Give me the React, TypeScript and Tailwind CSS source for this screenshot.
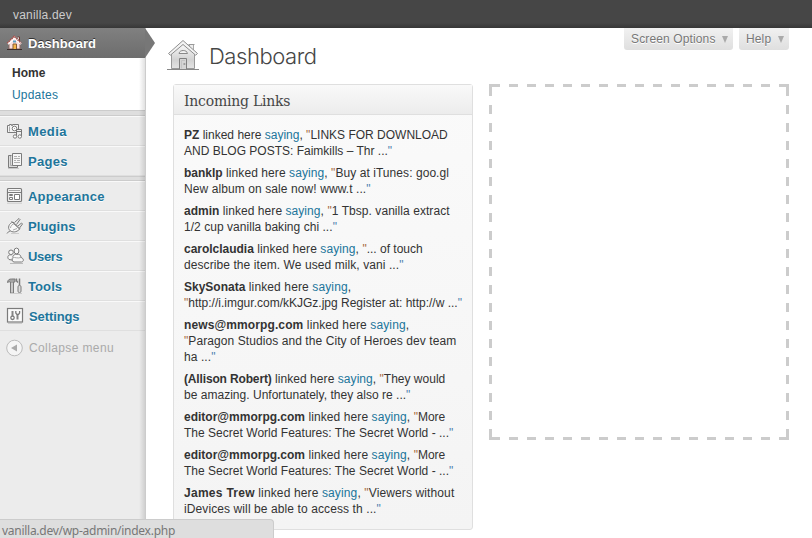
import type { ReactNode } from 'react';

const sans = "font-['Liberation_Sans',Arial,sans-serif]";

function Svg({ children, w = 18, h = 18 }: { children: ReactNode; w?: number; h?: number }) {
  return (
    <svg width={w} height={h} viewBox={`0 0 ${w} ${h}`} fill="none" stroke="#7b7b7b" strokeWidth="1" className="block shrink-0">
      {children}
    </svg>
  );
}

const MediaIcon = () => (
  <Svg>
    <path d="M1.5 3.500h2v-1h2v1h1v-1h6v8h-11z" fill="#f4f4f4" />
    <path d="M3.500 4.500v5" stroke="#aaa" />
    <circle cx="8.500" cy="6.500" r="2.300" fill="#fff" />
    <path d="M8 6.500h1" stroke="#aaa" />
    <path d="M10.500 14.500v-7h5v7" fill="#eee" stroke="#777" />
    <path d="M11 9.500h4" />
    <circle cx="9" cy="14.500" r="1.700" fill="#fff" />
    <circle cx="13.800" cy="14.500" r="1.700" fill="#fff" />
  </Svg>
);
const PagesIcon = () => (
  <Svg>
    <path d="M5.500 3.500h-3v12h9v-2" fill="#ddd" />
    <path d="M4.500 4v9.500h7" stroke="#aaa" />
    <path d="M6.500 1.500h9v12h-9z" fill="#f6f6f6" />
    <path d="M8 4.500h3M12 4.500h2M8 6.500h6M8 8.500h2M11 8.500h3M8 10.500h6" stroke="#b0b0b0" />
    <path d="M2 16.500h11" stroke="#c8c8c8" />
  </Svg>
);
const AppearanceIcon = () => (
  <Svg>
    <rect x="1.500" y="1.500" width="14" height="13" rx="1" fill="#f7f7f7" strokeWidth="1.200" />
    <path d="M3 3.500h11" stroke="#aaa" />
    <path d="M2 5.500h13" />
    <path d="M3.500 7.500h3v1h-3zM3.500 10.500h3v2h-3zM8.500 7.500h5v5h-5z" fill="#fff" />
    <path d="M1 16.200h15" stroke="#ccc" />
  </Svg>
);
const PluginsIcon = () => (
  <Svg>
    <path d="M1 16.500c1-2 2-1.500 3.500-2.500" />
    <path d="M4.500 14c-4-3-1-8 2.500-9l7 6.500c-2 3-6 4.500-9.500 2.500z" fill="#f8f8f8" />
    <path d="M5.500 4.500l8.500 8M8.500 5.500l4.500-4 1 1-3.500 5M12 9l3.500-3 1 1-3 4" fill="#eee" />
    <path d="M4.500 11c0-2 2-4 4-4.500M7 13l4-1.500" stroke="#aaa" />
    <path d="M5 16.500h8" stroke="#ccc" />
  </Svg>
);
const UsersIcon = () => (
  <Svg>
    <circle cx="5" cy="5.300" r="2.300" fill="#f8f8f8" />
    <path d="M5.500 8c-4-1-4.500 3-2.500 4.500l3 .5" fill="#f8f8f8" />
    <ellipse cx="10.500" cy="4" rx="2.400" ry="2.900" fill="#f8f8f8" />
    <path d="M9.500 7.300c-2 .7-3 1.700-2.500 3.200-1.500 1-1 4.500 1 4.500h7.500c3-.5 2-4-.5-4.500-.3-2-1-3-2.500-3.200z" fill="#f8f8f8" />
    <path d="M7 10.800c2-1 4 1 8-.3" stroke="#aaa" />
    <path d="M4 16.500h13" stroke="#bbb" />
  </Svg>
);
const ToolsIcon = () => (
  <Svg>
    <path d="M1.500 5.500c.3-3 2-3.500 4-3.500h3.500v3h-1.500v11h-3v-11c-1-.5-2 0-3 .5z" fill="#a5a5a5" />
    <path d="M6 6v9.500" stroke="#eee" />
    <path d="M10.500 1.500c-.5 2 0 3 1.500 4" strokeWidth="1.500" />
    <path d="M13.500 1.500v7" strokeWidth="1.500" />
    <rect x="12" y="8.500" width="3" height="7" rx="1.300" fill="#ddd" />
    <path d="M4 16.500h12" stroke="#ccc" />
  </Svg>
);
const SettingsIcon = () => (
  <Svg>
    <rect x="1.500" y="1.500" width="15" height="13.500" fill="#fafafa" strokeWidth="1.200" />
    <path d="M6.500 4v5M11.500 8v4.500" strokeWidth="2" stroke="#858585" />
    <circle cx="6.500" cy="10.800" r="1.700" fill="#fff" strokeWidth="1.300" />
    <path d="M9.800 4v2l1 1.300h1.800l1-1.300V4" strokeWidth="1.300" />
    <path d="M2 16.500h14" stroke="#ccc" />
  </Svg>
);
const ColorHouse = () => (
  <Svg>
    <path d="M11.500 3h2v4" fill="#fff" stroke="#713b35" />
    <path d="M3 9l5-6 6 6v6H3z" fill="#f9e0df" stroke="#8d6660" />
    <path d="M2 10l6.500-6.500 6.500 6.500" stroke="#fff" strokeWidth="2" />
    <path d="M1.200 9.300l7-7 7 7" stroke="#a84e49" strokeWidth="1.500" strokeDasharray="1.500 .6" />
    <path d="M7 7.500h3" stroke="#579fc4" strokeWidth="2" />
    <path d="M7 15V10h3.500v5" fill="#f6b64a" stroke="#865a36" />
    <path d="M1 15.500h15" stroke="#392d2d" />
  </Svg>
);
const BigHouse = () => (
  <Svg w={34} h={34}>
    <defs>
      <linearGradient id="wall" x1="0" y1="0" x2="0" y2="1">
        <stop stopColor="#fafafa" />
        <stop offset=".65" stopColor="#d2d2d2" />
        <stop offset="1" stopColor="#e4e4e4" />
      </linearGradient>
    </defs>
    <path d="M22.500 11V6.500h4V14" fill="#eee" stroke="#aaa" />
    <path d="M21.500 6.500h6" stroke="#999" />
    <path d="M4.500 15L16 6l11.500 9.500v15h-23z" fill="url(#wall)" stroke="#999" />
    <path d="M1.500 15.500L16 2.500l14.500 13-1.800 1.700L16 6.500 3.300 17.200z" fill="#f3f3f3" stroke="#8f8f8f" />
    <path d="M12 15.500c.5-4 8-4 8.500 0z" fill="#f1f1f1" stroke="#888" />
    <path d="M12.500 31V20.500h7V31" fill="#d5d5d5" stroke="#808080" />
    <path d="M14.500 30.500V22.500h3.500" stroke="#c4c4c4" />
    <path d="M16.500 26h1.800" stroke="#666" />
    <path d="M0 31.500h32" stroke="#888" />
  </Svg>
);

function MenuItem({ icon, label, track }: { icon: ReactNode; label: string; track: string }) {
  return (
    <div className="flex h-[30px] items-center border-t border-b border-t-[#f9f9f9] border-b-[#dfdfdf] pl-1.5 text-[13px] font-bold text-[#21759b]">
      {icon}
      <span className={`ml-1 pt-0.5 whitespace-nowrap [text-shadow:0_1px_0_#fff] ${track}`}>{label}</span>
    </div>
  );
}
const Separator = ({ height }: { height: string }) => <div className={`border-y border-[#ccc] bg-[#dedede] ${height}`} />;

type Link = { who: string; whoTrack?: string; midTrack?: string; first: string; firstTrack?: string; rest: string[]; restTrack?: string };
const links: Link[] = [
  { who: 'PZ', first: 'LINKS FOR DOWNLOAD', rest: ['AND BLOG POSTS: Faimkills – Thr ...'] },
  { who: 'banklp', midTrack: 'tracking-[.08px]', first: 'Buy at iTunes: goo.gl', firstTrack: 'tracking-[.06px]', rest: ['New album on sale now! www.t ...'], restTrack: 'tracking-[.09px]' },
  { who: 'admin', midTrack: 'tracking-[.06px]', first: '1 Tbsp. vanilla extract', firstTrack: 'tracking-[.06px]', rest: ['1/2 cup vanilla baking chi ...'], restTrack: 'tracking-[.04px]' },
  { who: 'carolclaudia', whoTrack: 'tracking-[-.02px]', midTrack: 'tracking-[.09px]', first: '... of touch', rest: ['describe the item. We used milk, vani ...'], restTrack: 'tracking-[.08px]' },
  { who: 'SkySonata', midTrack: 'tracking-[.12px]', first: '', rest: ['http://i.imgur.com/kKJGz.jpg Register at: http://w ...'] },
  { who: 'news@mmorpg.com', whoTrack: 'tracking-[.11px]', midTrack: 'tracking-[.12px]', first: '', rest: ['Paragon Studios and the City of Heroes dev team', 'ha ...'], restTrack: 'tracking-[.08px]' },
  { who: '(Allison Robert)', whoTrack: 'tracking-[-.15px]', midTrack: 'tracking-[.06px]', first: 'They would', rest: ['be amazing. Unfortunately, they also re ...'], restTrack: 'tracking-[.02px]' },
  { who: 'editor@mmorpg.com', midTrack: 'tracking-[.09px]', first: 'More', rest: ['The Secret World Features: The Secret World - ...'], restTrack: 'tracking-[.02px]' },
  { who: 'editor@mmorpg.com', midTrack: 'tracking-[.09px]', first: 'More', rest: ['The Secret World Features: The Secret World - ...'], restTrack: 'tracking-[.02px]' },
  { who: 'James Trew', whoTrack: 'tracking-[.28px]', midTrack: 'tracking-[.13px]', first: 'Viewers without', firstTrack: 'tracking-[.12px]', rest: ['iDevices will be able to access th ...'], restTrack: 'tracking-[.1px]' },
];

function LinkRow({ link }: { link: Link }) {
  return (
    <li className="mb-1.5 whitespace-nowrap text-xs leading-4">
      <div>
        <strong className={link.whoTrack}>{link.who}</strong>
        <span className={link.midTrack}>
          {' '}linked here <span className="text-[#21759b]">saying</span>,
        </span>
        {link.first && (
          <span className={link.firstTrack}>
            {' '}
            <span className="text-[#a5683a]">"</span>
            {link.first}
          </span>
        )}
      </div>
      {link.rest.map((text, i) => (
        <div key={text} className={link.restTrack}>
          {!link.first && i === 0 && <span className="text-[#a5683a]">"</span>}
          {text}
          {i === link.rest.length - 1 && <span className="text-[#4d7fae]">"</span>}
        </div>
      ))}
    </li>
  );
}

const hDash = 'h-[3px] bg-[repeating-linear-gradient(90deg,#ccc_0_9px,transparent_9px_18px)] bg-[position:2px_0] bg-[size:18px_3px]';
const vDash = 'h-full w-[3px] bg-[repeating-linear-gradient(180deg,#ccc_0_9px,transparent_9px_18px)] bg-[size:3px_18px]';

function Dropzone() {
  return (
    <div className="mt-14 flex h-[356px] w-[300px] flex-col">
      <div className={`${hDash} border-x-3 border-[#ccc] bg-origin-border`} />
      <div className="flex min-h-0 flex-1 justify-between">
        <div className={vDash} />
        <div className={vDash} />
      </div>
      <div className={`${hDash} border-x-3 border-[#ccc] bg-origin-border`} />
    </div>
  );
}

function Tab({ label, width }: { label: string; width: string }) {
  return (
    <div className={`flex h-[22px] items-center justify-between rounded-b-[3px] bg-linear-to-b from-[#f1f1f1] to-[#dfdfdf] pr-[5px] pl-[7px] text-xs text-[#777] ${width}`}>
      <span className="tracking-[.13px] [text-shadow:0_1px_0_#fff]">{label}</span>
      <span className="border-x-[3.5px] border-t-[7px] border-x-transparent border-t-[#aaa]" />
    </div>
  );
}

export default function App() {
  return (
    <div className={`relative flex h-[538px] w-[812px] flex-col overflow-hidden bg-white text-[#333] ${sans}`}>
      <header className="flex h-7 shrink-0 items-center bg-[linear-gradient(#464646_0_23px,#373737)] pl-[13px] text-xs text-[#ccc]">
        <span className="pt-0.5 tracking-[.2px]">vanilla.dev</span>
      </header>
      <div className="flex min-h-0 flex-1">
        <aside className="relative w-[146px] shrink-0 border-r border-[#ccc] bg-[#ececec]">
          <div className="flex h-[30px] items-center bg-linear-to-b from-[#808080] to-[#6d6d6d] pl-1.5 text-[13px] font-bold text-white">
            <ColorHouse />
            <span className="ml-1 pt-0.5 [text-shadow:0_-1px_0_#333]">Dashboard</span>
          </div>
          <div className="h-[52px] bg-white pt-1 pl-3 text-xs leading-[22px]">
            <div className="font-bold">Home</div>
            <div className="tracking-[.2px] text-[#21759b]">Updates</div>
          </div>
          <Separator height="h-1.5" />
          <MenuItem icon={<MediaIcon />} label="Media" track="tracking-[.4px]" />
          <MenuItem icon={<PagesIcon />} label="Pages" track="tracking-[.3px]" />
          <Separator height="h-[5px]" />
          <MenuItem icon={<AppearanceIcon />} label="Appearance" track="tracking-[.22px]" />
          <MenuItem icon={<PluginsIcon />} label="Plugins" track="tracking-[.1px]" />
          <MenuItem icon={<UsersIcon />} label="Users" track="-tracking-[.35px]" />
          <MenuItem icon={<ToolsIcon />} label="Tools" track="tracking-[.1px]" />
          <MenuItem icon={<SettingsIcon />} label="Settings" track="pl-px tracking-[-.1px]" />
          <div className="flex h-[34px] items-center pl-1.5 text-xs text-[#aaa]">
            <Svg>
              <circle cx="8.500" cy="9" r="7.800" fill="#f5f5f5" stroke="#bbb" />
              <path d="M5 9l6-3.500v7z" fill="#aaa" stroke="none" />
            </Svg>
            <span className="ml-[5px] tracking-[.38px]">Collapse menu</span>
          </div>
          <div className="absolute top-[30px] right-0 bottom-0 w-1.5 bg-linear-to-r from-transparent to-black/12" />
          <div className="absolute top-0 left-[145px] h-[30px] w-[10px] bg-[#777] [clip-path:polygon(0_0,100%_50%,0_100%)]" />
        </aside>
        <main className="flex pl-[21px]">
          <section className="w-[306px]">
            <div className="flex h-14 items-start">
              <div className="pt-[10px]"><BigHouse /></div>
              <h1 className="mt-[11px] ml-2 font-[Inter,sans-serif] text-[22px] leading-[34px] font-light tracking-[-.45px] text-[#464646]">Dashboard</h1>
            </div>
            <div className="ml-1.5 h-[446px] w-[300px] rounded-[3px] border border-[#dfdfdf] bg-linear-to-b from-[#fafafa] to-[#f4f4f4]">
              <h2 className="flex h-[30px] items-center border-b border-[#dfdfdf] bg-linear-to-b from-[#f9f9f9] to-[#ececec] pt-1 pl-2.5 font-['DejaVu_Serif',serif] text-[14px] tracking-[-.23px] text-[#464646]">Incoming Links</h2>
              <ul className="pt-3 pl-2.5">
                {links.map((link, i) => <LinkRow key={i} link={link} />)}
              </ul>
            </div>
          </section>
          <section className="ml-4"><Dropzone /></section>
        </main>
      </div>
      <div className="absolute top-7 right-[23px] flex gap-1.5">
        <Tab label="Screen Options" width="w-[109px]" />
        <Tab label="Help" width="w-[50px]" />
      </div>
      <div className="absolute bottom-0 left-0 flex h-[19px] w-[274px] items-center rounded-tr border-t border-r border-[#ccc] bg-[#dedede] pt-1 pl-0.5 font-['Noto_Sans',sans-serif] text-[12px] tracking-[-.27px] text-[#777]">
        vanilla.dev/wp-admin/index.php
      </div>
    </div>
  );
}
